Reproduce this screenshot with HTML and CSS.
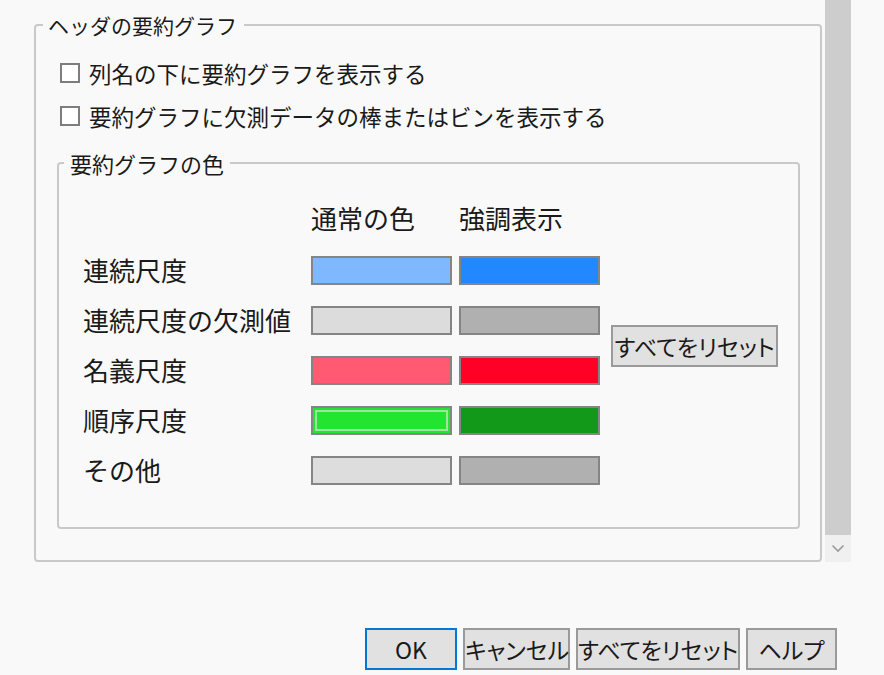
FILE: index.html
```html
<!DOCTYPE html>
<html lang="ja">
<head>
<meta charset="utf-8">
<link rel="stylesheet" href="styles.css">
</head>
<body>
<div class="top">
  <div class="main">
    <fieldset class="outer">
      <legend class="outer-legend">ヘッダの要約グラフ</legend>
      <label class="check"><span class="box"></span>列名の下に要約グラフを表示する</label>
      <label class="check second"><span class="box"></span>要約グラフに欠測データの棒またはビンを表示する</label>
      <fieldset class="inner">
        <legend class="inner-legend">要約グラフの色</legend>
        <div class="grid">
          <div class="label"></div>
          <div class="head">通常の色</div>
          <div class="head">強調表示</div>
          <div></div>

          <div class="label">連続尺度</div>
          <div class="sw c-cont"></div>
          <div class="sw c-cont-h"></div>
          <div></div>

          <div class="label">連続尺度の欠測値</div>
          <div class="sw c-miss"></div>
          <div class="sw c-miss-h"></div>
          <button class="btn reset-inner">すべてをリセット</button>

          <div class="label">名義尺度</div>
          <div class="sw c-nom"></div>
          <div class="sw c-nom-h"></div>

          <div class="label">順序尺度</div>
          <div class="sw c-ord selected"></div>
          <div class="sw c-ord-h"></div>
          <div></div>

          <div class="label">その他</div>
          <div class="sw c-oth"></div>
          <div class="sw c-oth-h"></div>
          <div></div>
        </div>
      </fieldset>
    </fieldset>
  </div>
  <div class="scrollbar">
    <div class="thumb"></div>
    <div class="arrow">
      <svg width="14" height="9" viewBox="0 0 14 9"><path d="M1.5 1.5 L7 7 L12.5 1.5" fill="none" stroke="#9a9a9a" stroke-width="1.6"/></svg>
    </div>
  </div>
</div>
<div class="buttons">
  <button class="btn ok">OK</button>
  <button class="btn cancel">キャンセル</button>
  <button class="btn resetall">すべてをリセット</button>
  <button class="btn help">ヘルプ</button>
</div>
</body>
</html>
```
FILE: styles.css
```css
html, body {
  margin: 0;
  padding: 0;
  background: #f9f9f9;
}
body {
  font-family: "Noto Sans CJK JP", "Noto Sans", sans-serif;
  font-size: 23px;
  color: #1a1a1a;
  width: 884px;
  height: 675px;
  overflow: hidden;
}
.top {
  display: flex;
  height: 562px;
}
.main {
  width: 825px;
  padding-top: 10px;
  box-sizing: border-box;
}
fieldset {
  margin: 0;
  min-width: 0;
  border: 2px solid #c9c9c9;
  border-radius: 4px;
}
.outer {
  margin-left: 34px;
  width: 788px;
  box-sizing: border-box;
  padding: 18px 20px 30px 21px;
  height: 552px;
}
legend {
  line-height: 30px;
}
.outer-legend {
  font-size: 21px;
  padding: 0 7px 0 5px;
  margin-left: -14px;
}
.check {
  display: flex;
  align-items: center;
  height: 30px;
  line-height: 30px;
  margin-left: 3px;
  white-space: nowrap;
  font-size: 22.5px;
}
.check.second {
  margin-top: 13px;
}
.box {
  width: 16px;
  height: 16px;
  border: 2px solid #7d7d7d;
  background: #fff;
  margin-right: 9px;
  flex: none;
}
.inner {
  margin-top: 17px;
  padding: 28px 20px 40px 24px;
  height: 381px;
  box-sizing: border-box;
}
.inner-legend {
  font-size: 22px;
  padding: 0 6px;
  margin-left: -19px;
}
.grid {
  display: grid;
  grid-template-columns: 221px 141px 141px auto;
  grid-auto-rows: 29px;
  column-gap: 7px;
  row-gap: 21px;
  align-items: center;
  font-size: 26px;
}
.label {
  white-space: nowrap;
  line-height: 29px;
  margin-top: -2px;
}
.head {
  align-self: start;
  line-height: 24px;
  margin-top: 0;
}
.sw {
  height: 29px;
  margin-top: 0;
  box-sizing: border-box;
  border: 2px solid #858585;
}
.c-cont { background: #80b8ff; }
.c-cont-h { background: #2288ff; }
.c-miss { background: #dcdcdc; }
.c-miss-h { background: #b0b0b0; }
.c-nom { background: #ff5a72; }
.c-nom-h { background: #ff0027; }
.c-ord { background: #22e52f; }
.c-ord-h { background: #12991a; }
.c-oth { background: #dddddd; }
.c-oth-h { background: #b0b0b0; }
.sw.selected {
  box-shadow: inset 0 0 0 2px #22e52f, inset 0 0 0 4px #9ee59f;
}
.btn {
  font-family: inherit;
  font-size: 23px;
  font-feature-settings: "palt";
  color: #1a1a1a;
  background: #e1e1e1;
  border: 2px solid #9a9a9a;
  height: 42px;
  padding: 0;
  margin: 0;
  line-height: 36px;
  box-sizing: border-box;
  white-space: nowrap;
}
.reset-inner {
  grid-row: 3 / 5;
  grid-column: 4;
  align-self: center;
  justify-self: start;
  width: 167px;
  margin-left: 4px;
}
.scrollbar {
  width: 26px;
  display: flex;
  flex-direction: column;
}
.thumb {
  height: 535px;
  background: #cdcdcd;
}
.arrow {
  height: 27px;
  background: #f0f0f0;
  display: flex;
  justify-content: center;
  align-items: center;
}
.buttons {
  display: flex;
  justify-content: flex-end;
  gap: 6px;
  padding-right: 47px;
  margin-top: 66px;
}
.ok { width: 92px; border-color: #0078d7; }
.cancel { width: 107px; }
.resetall { width: 164px; }
.help { width: 91px; }
```
